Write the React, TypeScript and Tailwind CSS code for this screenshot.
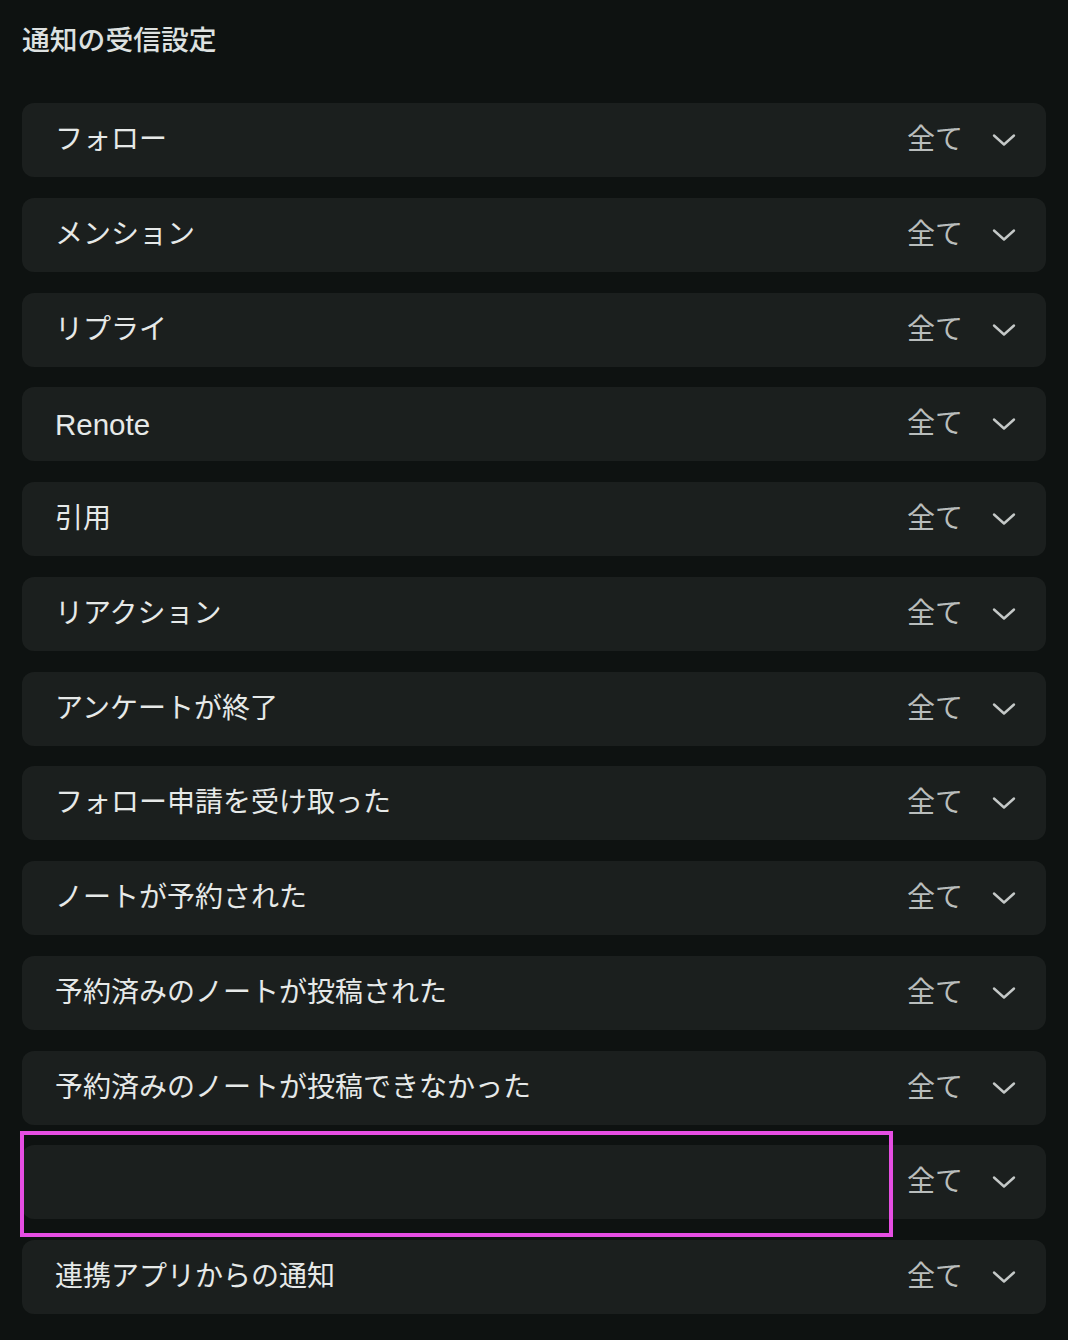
import React from "react";

const items = [
  "フォロー",
  "メンション",
  "リプライ",
  "Renote",
  "引用",
  "リアクション",
  "アンケートが終了",
  "フォロー申請を受け取った",
  "ノートが予約された",
  "予約済みのノートが投稿された",
  "予約済みのノートが投稿できなかった",
  "",
  "連携アプリからの通知",
];

function Chevron() {
  return (
    <svg width="24" height="24" viewBox="0 0 24 24" fill="none" stroke="#c4c8c7" strokeWidth="2.4" strokeLinecap="round" strokeLinejoin="round">
      <path d="M2 7.5 L12 16.5 L22 7.5" />
    </svg>
  );
}

export default function App() {
  return (
    <div
      className="w-[1068px] h-[1340px] bg-[#0e1211] px-[22px] pt-[21px] overflow-hidden"
      style={{ fontFamily: '"Liberation Sans", "Noto Sans CJK JP", sans-serif' }}
    >
      <div className="h-[40px] leading-[40px] text-[27.8px] font-medium text-[#dde1e0] mb-[42px]">
        通知の受信設定
      </div>
      <div className="flex flex-col gap-[20.75px]">
        {items.map((label, i) => (
          <div key={i} className="relative">
            <div className="h-[74px] rounded-[12px] bg-[#1b1f1e] flex items-center pl-[33px] pr-[30px]">
              <div className={label === "Renote" ? "flex-1 text-[29.5px] text-[#e6e9e8] leading-none" : "flex-1 text-[28px] text-[#e6e9e8] leading-none"}>{label}</div>
              <div className="text-[28px] text-[#b9bdbc] leading-none">全て</div>
              <div className="ml-[29px] flex items-center">
                <Chevron />
              </div>
            </div>
            {i === 11 && (
              <div className="absolute left-[-2px] top-[-14px] w-[873px] h-[106px] border-4 border-[#e64ee3]" />
            )}
          </div>
        ))}
      </div>
    </div>
  );
}
